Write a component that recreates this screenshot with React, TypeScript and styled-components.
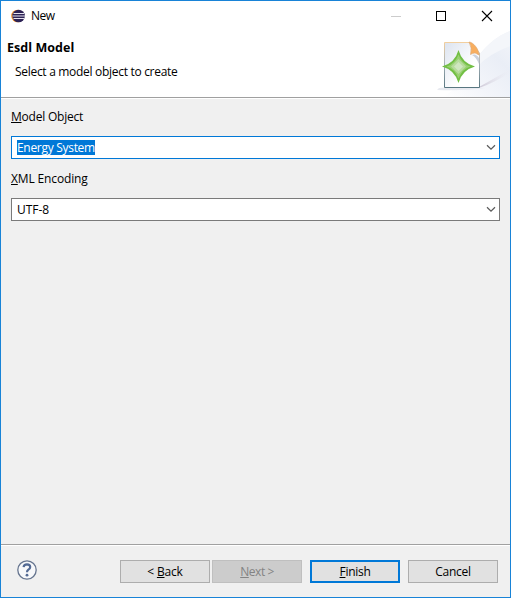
import React from "react";
import styled, { createGlobalStyle } from "styled-components";

const GlobalStyle = createGlobalStyle`
  * { box-sizing: border-box; }
  html, body, #root { margin: 0; height: 100%; }
  body { overflow: hidden; }
`;

const Dialog = styled.div`
  width: 511px;
  height: 598px;
  display: flex;
  flex-direction: column;
  border: 1px solid #1883d7;
  background: #f0f0f0;
  color: #000;
  font: 12px/16px "Open Sans", "Noto Sans", sans-serif;
`;

const Top = styled.div`
  position: relative;
  height: 98px;
  flex: none;
  background: #fff;
  border-bottom: 1px solid #fff;
  box-shadow: inset 0 -1px #a0a0a0;
`;

const Banner = styled.svg`
  position: absolute;
  right: 0;
  bottom: 1px;
`;

const TitleBar = styled.div`
  position: relative;
  height: 30px;
  display: flex;
  align-items: center;
  padding: 0 17px 1px 10px;
`;

const AppIcon = styled.svg`
  margin-right: 6px;
`;

const Controls = styled.svg`
  margin-left: auto;
`;

const Text = styled.span<{ $track?: number }>`
  white-space: pre;
  letter-spacing: ${(p) => p.$track ?? -0.3}px;
`;

const Key = styled.span`
  text-decoration: underline;
  text-decoration-thickness: 1px;
  text-underline-offset: 1px;
  text-decoration-skip-ink: none;
`;

const Heading = styled.div`
  position: relative;
  display: flex;
  flex-direction: column;
  padding: 9px 0 0 6px;
`;

const Headline = styled.div`
  height: 16px;
  font-size: 12.5px;
  font-weight: 700;
`;

const Description = styled.div`
  height: 16px;
  margin: 8px 0 0 8px;
`;

const Form = styled.div`
  flex: 1;
  padding: 10px 10px 0;
`;

const Label = styled.label`
  display: block;
  height: 27px;
`;

const Combo = styled.div<{ $focus?: boolean }>`
  height: 23px;
  margin-bottom: 12px;
  padding: 0 3px 0 5px;
  display: flex;
  align-items: center;
  justify-content: space-between;
  background: #fff;
  border: 1px solid ${(p) => (p.$focus ? "#0078d7" : "#7a7a7a")};
`;

const Value = styled.div<{ $selected?: boolean }>`
  height: 15px;
  line-height: 15px;
  margin-top: -1px;
  color: ${(p) => (p.$selected ? "#fff" : "#000")};
  background: ${(p) => (p.$selected ? "#0078d7" : "transparent")};
`;

const Footer = styled.div`
  height: 53px;
  flex: none;
  display: flex;
  align-items: flex-start;
  gap: 8px;
  padding: 14px 12px 0 16px;
  border-top: 1px solid #a0a0a0;
  box-shadow: inset 0 1px #fff;
`;

const Help = styled.svg`
  margin: 1px auto 0 0;
`;

const Group = styled.div`
  display: flex;
  gap: 2px;
`;

const Button = styled.button<{ $primary?: boolean }>`
  width: 90px;
  height: 23px;
  margin: 1px 0 0;
  padding: 0;
  font: inherit;
  color: #000;
  background: #e1e1e1;
  border: ${(p) => (p.$primary ? "2px solid #0078d7" : "1px solid #adadad")};
  line-height: ${(p) => (p.$primary ? 19 : 21)}px;
  &:disabled {
    color: #838383;
    background: #ccc;
    border-color: #bfbfbf;
  }
`;

const Chevron = () => (
  <svg width="10" height="7" viewBox="0 0 10 7">
    <path d="M1 1.3 5 5.2 9 1.3" fill="none" stroke="#5a5a5a" strokeWidth="1.2" />
  </svg>
);

const HeaderArt = () => (
  <Banner width="76" height="70" viewBox="-1 -3 76 70">
    <defs>
      <linearGradient id="swoosh" x1="0" y1="1" x2="1" y2="0">
        <stop offset="0" stopColor="#fff" />
        <stop offset=".35" stopColor="#f3f5fa" />
        <stop offset=".7" stopColor="#eaeef6" />
        <stop offset="1" stopColor="#f3f5fa" />
      </linearGradient>
      <linearGradient id="paper" x1="0" y1="0" x2="1" y2="1">
        <stop offset="0" stopColor="#dce3ef" />
        <stop offset=".65" stopColor="#fff" />
      </linearGradient>
      <linearGradient id="edge" x1="0" y1="0" x2="0" y2="1">
        <stop offset="0" stopColor="#f2cf9e" />
        <stop offset=".45" stopColor="#a9b4ba" />
        <stop offset="1" stopColor="#587680" />
      </linearGradient>
      <linearGradient id="shade" x1="0" y1="0" x2="1" y2="0">
        <stop offset="0" stopColor="#cdc8d6" />
        <stop offset="1" stopColor="#e7e6ef" stopOpacity="0" />
      </linearGradient>
    </defs>
    <path d="M8 67Q28 55 38 34Q54 9 75 1V67Z" fill="url(#swoosh)" />
    <path d="M43 36Q54 24 75 16V1Q58 7 43 26Z" fill="#f4f6fa" />
    <path d="M44 57 74 40V43Q61 52 44 58Z" fill="url(#shade)" />
    <path d="M4 58Q25 55 50 58Q30 61 2 60Z" fill="#e8eaf0" />
    <path d="M9.5 12.5H34.5L44.5 23V57.5H9.5Z" fill="url(#paper)" stroke="url(#edge)" />
    <path d="M34 12C38 12 44 19 44 25L42 24Q40 22 35.5 24.5Q37.5 18 34 12Z" fill="#f8ae5f" stroke="#d8a36f" strokeWidth=".6" />
    <path d="M37 25Q41 23 44 28V34Q41 27 37 25Z" fill="#cbd1dc" />
    <path d="M23.5 20Q27 33 40 36.5Q27 40 23.5 53Q20 40 7 36.5Q20 33 23.5 20Z" fill="#72bf44" />
    <path d="M23.5 24.5Q27 34 35.5 36.5Q27 39 23.5 48.5Q20 39 11.5 36.5Q20 34 23.5 24.5Z" fill="#99d072" />
    <path d="M23.5 29 31 36.5 23.5 44 16 36.5Z" fill="#b7dc9d" />
    <path d="M23.5 32 28 36.5 23.5 41 19 36.5Z" fill="#d0e7c0" />
  </Banner>
);

export default function App() {
  return (
    <>
      <GlobalStyle />
      <Dialog>
        <Top>
          <HeaderArt />
          <TitleBar>
            <AppIcon width="14" height="14" viewBox="0 0 14 14">
              <circle cx="6.5" cy="7" r="6.3" fill="#f6942c" />
              <circle cx="7.6" cy="7" r="6.3" fill="#2c2255" />
              <path d="M2.5 4.5H13M1.5 7H14M2.5 9.5H13" stroke="#e6e3f0" strokeWidth="1.1" />
            </AppIcon>
            <Text $track={-0.5}>New</Text>
            <Controls width="102" height="12" viewBox="0 0 102 12" fill="none">
              <path d="M0 6.5H10" stroke="#ccc" />
              <rect x="45.5" y="1.5" width="9" height="9" stroke="#000" />
              <path d="M91 1 101 11M101 1 91 11" stroke="#000" strokeWidth="1.1" />
            </Controls>
          </TitleBar>
          <Heading>
            <Headline><Text $track={0.05}>Esdl Model</Text></Headline>
            <Description><Text>Select a model object to create</Text></Description>
          </Heading>
        </Top>
        <Form>
          <Label><Text $track={-0.22}><Key>M</Key>odel Object</Text></Label>
          <Combo $focus>
            <Value $selected><Text>Energy System</Text></Value>
            <Chevron />
          </Combo>
          <Label><Text $track={-0.14}><Key>X</Key>ML Encoding</Text></Label>
          <Combo>
            <Value><Text $track={-0.05}>UTF-8</Text></Value>
            <Chevron />
          </Combo>
        </Form>
        <Footer>
          <Help width="20" height="20" viewBox="0 0 20 20" fill="none">
            <circle cx="10" cy="10" r="9.2" fill="#f7f8fa" stroke="#66758f" strokeWidth="1.3" />
            <path d="M6.6 7.2Q6.8 4.3 10 4.3Q13.2 4.4 13.2 7Q13.2 8.5 11.4 9.7Q10 10.7 10 12.2" stroke="#536a94" strokeWidth="2.2" />
            <circle cx="10" cy="15.2" r="1.4" fill="#536a94" />
          </Help>
          <Group>
            <Button><Text $track={-0.15}>{"< "}<Key>B</Key>ack</Text></Button>
            <Button disabled><Text $track={-0.45}><Key>N</Key>{"ext >"}</Text></Button>
          </Group>
          <Button $primary><Text>
            <Key>F</Key>inish</Text></Button>
          <Button><Text>Cancel</Text></Button>
        </Footer>
      </Dialog>
    </>
  );
}
